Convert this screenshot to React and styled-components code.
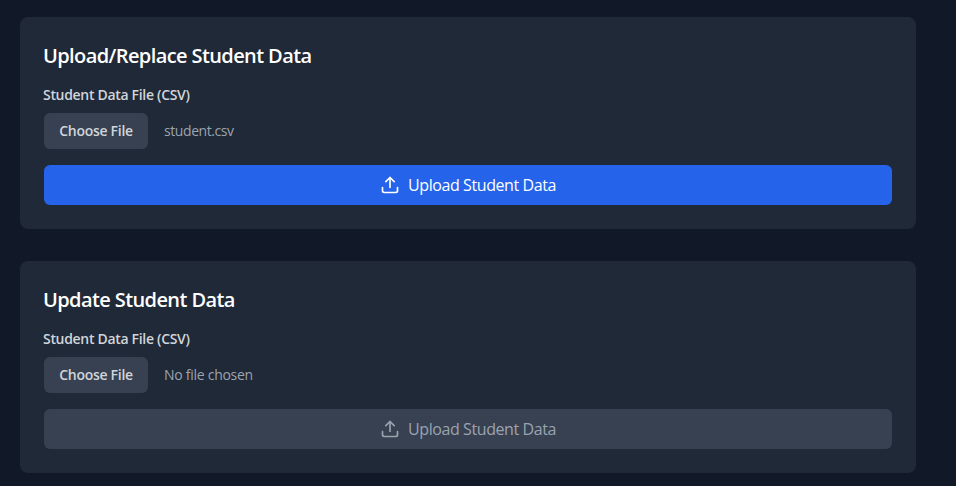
import React from 'react';
import styled, { createGlobalStyle } from 'styled-components';

const GlobalStyle = createGlobalStyle`
  *, *::before, *::after { box-sizing: border-box; }
  body {
    margin: 0;
    background: #111827;
    color: #fff;
    font-family: "Open Sans", "Noto Sans", sans-serif;
    overflow: hidden;
  }
`;

const Page = styled.main`
  display: flex;
  flex-direction: column;
  gap: 32px;
  height: 486px;
  padding: 17px 40px 0 20px;
`;

const Card = styled.section`
  height: 212px;
  padding: 24px;
  border-radius: 8px;
  background: #1f2937;
`;

const Title = styled.h2`
  margin: 0 0 15px -1px;
  padding-top: 1px;
  font-size: 20px;
  line-height: 28px;
  font-weight: 600;
  letter-spacing: -0.6px;
  white-space: nowrap;
`;

const Label = styled.label`
  display: block;
  margin: 0 0 8px -1px;
  font-size: 14px;
  line-height: 20px;
  font-weight: 600;
  letter-spacing: -0.31px;
  color: #d1d5db;
`;

const FileRow = styled.div`
  display: flex;
  align-items: center;
  gap: 16px;
  margin-bottom: 16px;
`;

const ChooseButton = styled.button`
  width: 104px;
  height: 36px;
  padding: 0;
  border: 0;
  border-radius: 6px;
  background: #374151;
  color: #d1d5db;
  font: 600 14px/20px "Open Sans", "Noto Sans", sans-serif;
  letter-spacing: -0.28px;
`;

const FileName = styled.span`
  font-size: 14px;
  line-height: 20px;
  letter-spacing: ${(p) => (p.$chosen ? '-0.42px' : '-0.27px')};
  color: #9ca3af;
`;

const UploadButton = styled.button`
  display: flex;
  align-items: center;
  justify-content: center;
  gap: 8px;
  width: 100%;
  height: 40px;
  border: 0;
  border-radius: 6px;
  background: ${(p) => (p.disabled ? '#374151' : '#2563eb')};
  color: ${(p) => (p.disabled ? '#9ca3af' : '#fff')};
  font: 400 16px/24px "Open Sans", "Noto Sans", sans-serif;
  letter-spacing: -0.42px;
`;

function UploadIcon() {
  return (
    <svg width="20" height="20" viewBox="0 0 24 24" fill="none" stroke="currentColor" strokeWidth="2" strokeLinecap="round" strokeLinejoin="round">
      <path d="M21 15v4a2 2 0 0 1-2 2H5a2 2 0 0 1-2-2v-4" />
      <polyline points="17 8 12 3 7 8" />
      <line x1="12" y1="3" x2="12" y2="15" />
    </svg>
  );
}

function UploadCard({ title, fileName }) {
  return (
    <Card>
      <Title>{title}</Title>
      <Label>Student Data File (CSV)</Label>
      <FileRow>
        <ChooseButton>Choose File</ChooseButton>
        <FileName $chosen={Boolean(fileName)}>{fileName || 'No file chosen'}</FileName>
      </FileRow>
      <UploadButton disabled={!fileName}>
        <UploadIcon />
        <span>Upload Student Data</span>
      </UploadButton>
    </Card>
  );
}

export default function App() {
  return (
    <>
      <GlobalStyle />
      <Page>
        <UploadCard title="Upload/Replace Student Data" fileName="student.csv" />
        <UploadCard title="Update Student Data" />
      </Page>
    </>
  );
}
